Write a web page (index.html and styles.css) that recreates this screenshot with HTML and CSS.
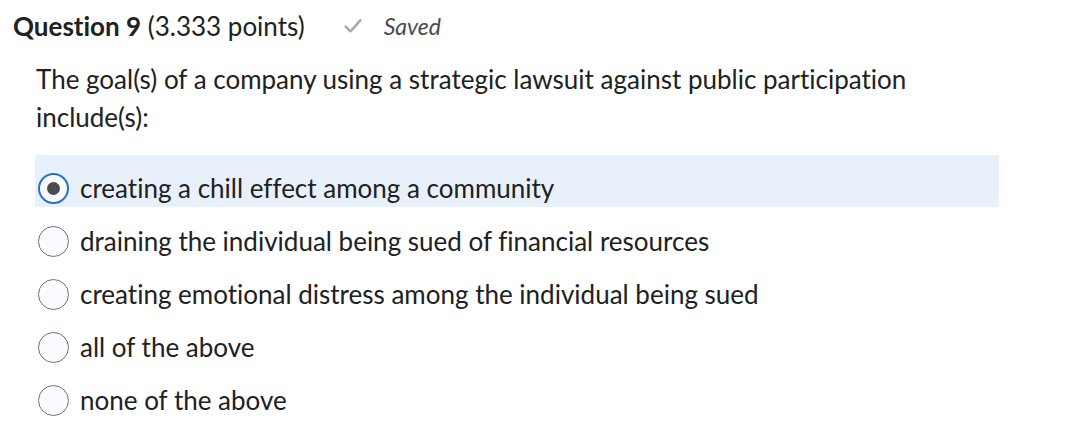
FILE: index.html
```html
<!DOCTYPE html>
<html lang="en">
<head>
<meta charset="utf-8">
<title>Question 9</title>
<link rel="stylesheet" href="styles.css">
</head>
<body>
<div class="question">
  <div class="header">
    <h2 class="title"><strong>Question 9</strong> (3.333 points)</h2>
    <div class="saved">
      <svg class="check" viewBox="0 0 16 14" width="18" height="16" aria-hidden="true">
        <path d="M1.5 7.5 L5.8 11.8 L14.5 2" fill="none" stroke="#a3abb3" stroke-width="2.2" stroke-linecap="round" stroke-linejoin="round"/>
      </svg>
      <span class="saved-text">Saved</span>
    </div>
  </div>
  <p class="prompt">The goal(s) of a company using a strategic lawsuit against public participation include(s):</p>
  <div class="options">
    <label class="option selected"><span class="radio checked"></span><span class="label">creating a chill effect among a community</span></label>
    <label class="option"><span class="radio"></span><span class="label">draining the individual being sued of financial resources</span></label>
    <label class="option"><span class="radio"></span><span class="label">creating emotional distress among the individual being sued</span></label>
    <label class="option"><span class="radio"></span><span class="label">all of the above</span></label>
    <label class="option"><span class="radio"></span><span class="label">none of the above</span></label>
  </div>
</div>
</body>
</html>
```
FILE: styles.css
```css
html, body {
  margin: 0;
  padding: 0;
  background: #ffffff;
}
body {
  font-family: Lato, "Noto Sans", sans-serif;
  color: #202122;
  font-variant-ligatures: none;
}
.question {
  padding: 8px 0 0 13px;
  width: 986px;
}
.header {
  display: flex;
  align-items: center;
  height: 36px;
}
.title {
  margin: 0;
  font-size: 26px;
  font-weight: 400;
  line-height: 36px;
}
.title strong {
  font-weight: 700;
}
.saved {
  display: flex;
  align-items: center;
  margin-left: 39px;
}
.check {
  display: block;
  margin-right: 22px;
}
.saved-text {
  font-style: italic;
  font-size: 23px;
  color: #494c4e;
}
.prompt {
  margin: 16px 0 0 23px;
  font-size: 26px;
  line-height: 38px;
  width: 900px;
}
.options {
  margin: 19px 0 0 22px;
  display: flex;
  flex-direction: column;
}
.option {
  box-sizing: border-box;
  display: flex;
  align-items: center;
  height: 52px;
  margin-bottom: 1px;
  padding: 16px 0 2px 3px;
  font-size: 26px;
  line-height: 34px;
}
.option.selected {
  background: #e8f1fb;
}
.radio {
  box-sizing: border-box;
  width: 31px;
  height: 31px;
  border-radius: 50%;
  border: 1px solid #6e7376;
  background: #f9fbff;
  margin-right: 11px;
  flex: none;
  position: relative;
}
.radio.checked {
  border: 2px solid #2a71c6;
  background: #f9fbff;
}
.radio.checked::after {
  content: "";
  position: absolute;
  left: 50%;
  top: 50%;
  width: 13px;
  height: 13px;
  margin: -6.5px 0 0 -6.5px;
  border-radius: 50%;
  background: #494c4e;
}
```
